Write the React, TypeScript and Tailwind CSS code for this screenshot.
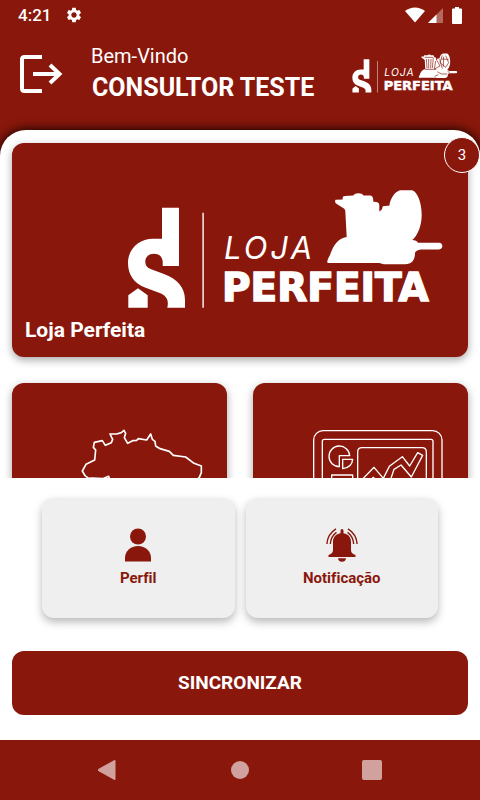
import { MdSettings } from "react-icons/md";

function LogoLojaPerfeita({ className, detailed = false }: { className: string; detailed?: boolean }) {
  return (
    <svg viewBox="0 0 316 120" fill="#fff" className={className} role="img" aria-label="Loja Perfeita">
      {/* SD symbol */}
      <path d="M34 18.7H51V77H34.7V73C34.7 68 31 64.7 26 64.7C21 64.7 17.3 68 17.3 72.7C17.3 76.5 19 78.5 22.5 80L36 85C49 90 57 98 57 111V118.7H39.3C40.6 113 40 108 33 104.5L17 98.5C6 94 0 86 0 74C0 60 11 49.7 25 49.7H34Z" />
      <path d="M.3 118.7V106.3L10 99.3L19.7 106.3V118.7Z" />
      <path d="M74.4 23.7H75.8V118.7H74.4Z" />

      <text x="96" y="70" className="font-['Inter'] text-[31px] italic tracking-widest">
        LOJA
      </text>
      <text x="94" y="112" stroke="#fff" strokeWidth="1.5" className="font-['DejaVu_Sans'] text-[39px] font-bold">
        PERFEITA
      </text>

      {/* Kettle, lid and frying pan */}
      <path d="M200 74C198.500 74 199.500 70 202 66C205 57 210 49 218.700 48L217.300 22C217 20 216 19.500 214.700 18.700L208 14.500C206.500 13 207 10.700 208 10.700L214.700 10.500C214.500 8 215 7 217 7L225.300 6.500C227 3.500 234 3.500 235.500 6.500H241C244.500 6.500 245.300 8 245.300 12.700C249 12.500 251.300 13.500 251.300 16V22.500C252.500 21.500 254 21.500 254.500 18C255 16.500 258 17 261.300 16.700C262 11 266 3 272 1.300H284C290 3 293.700 15 293.700 26C293.700 36 290 46 284.300 51C287 51 289 52 290 53.700H311C315.500 53.700 315.500 60.500 311 60.500H294C291 60.500 287.500 62 287 64C287 71 284 75.300 277 75.300H256C254 75.300 253.500 74 251 74Z" />
      {detailed && (
        <g fill="none" stroke="#8a170b" strokeWidth="2">
          <path d="M217 13L242 13M222 18L224 46M229 18V46M236 18L235 46M243 14L240 45M218 49H252" />
          <path d="M250 24L246 48L263 39L254 22M262 19L270 47M270 7L263 29L280 43L289 29L280 8M266 18L289 19M274 11L273 41" />
          <path d="M255 56L267 63H285M247 70L258 65M286 56L292 58" />
        </g>
      )}
    </svg>
  );
}

function StatusBar() {
  return (
    <div className="flex h-[30px] items-center justify-between px-[18px]">
      <div className="flex items-center gap-[14px]">
        <span className="text-[17px] leading-5 font-medium">4:21</span>
        <MdSettings className="size-[18px]" />
      </div>
      <div className="flex items-center">
        <svg viewBox="0 0 20 16" className="h-4 w-5" fill="currentColor">
          <path d="M0 4C6 -.8 14 -.8 20 4L10 15.500Z" />
        </svg>
        <svg viewBox="0 0 16 16" className="ml-[3px] size-4" fill="currentColor">
          <path d="M0 16L15 1V16Z" opacity=".35" />
          <path d="M0 16L8.500 7.500V16Z" />
        </svg>
        <svg viewBox="0 0 10 17" className="ml-2 h-[17px] w-2.5" fill="currentColor">
          <path d="M3 0H7V1.500H9Q10 1.500 10 2.500V16Q10 17 9 17H1Q0 17 0 16V2.500Q0 1.500 1 1.500H3Z" />
        </svg>
      </div>
    </div>
  );
}

function Header() {
  return (
    <header className="flex h-[100px] items-start pr-[22px] pl-5">
      <button type="button" aria-label="Sair" className="mt-6">
        <svg viewBox="0 0 43 40" className="h-10 w-[43px]" fill="none" stroke="currentColor">
          <path d="M22 3H4.500Q2 3 2 5.500V34.500Q2 37 4.500 37H22" strokeWidth="4" />
          <path d="M13 20H39M30 11L39.500 20L30 29" strokeWidth="4" />
        </svg>
      </button>
      <div className="mt-[14px] ml-7 flex-1">
        <p className="text-[20px] leading-6">Bem-Vindo</p>
        <h1 className="pl-px text-[25px] leading-10 font-bold whitespace-nowrap">CONSULTOR TESTE</h1>
      </div>
      <LogoLojaPerfeita detailed className="mt-[23px] h-10 w-[106px]" />
    </header>
  );
}

function BrazilMap() {
  return (
    <svg viewBox="237 174 372 360" className="h-[120px] w-[124px]" fill="none" stroke="#fff" strokeWidth="5" strokeLinejoin="round">
      <path d="M276 324L266 325L255 317L247 303L258 283L284 270L287 240L280 232L283 217L307 212L316 226L334 218L338 208L330 192L350 192L364 188L372 181L377 190L373 203L383 220L398 212L410 211L415 206L440 210L452 192L457 208L465 214L467 228L480 236L508 244L520 256L557 261L582 280L604 288V308L598 322L570 350L564 400L550 440L500 460L480 500L440 530L410 505L430 480L410 440L400 400L350 370L340 345L328 326L326 319L308 326Z" />
    </svg>
  );
}

function ChartBoard() {
  return (
    <svg viewBox="216 174 396 360" className="h-[120px] w-[132px]" fill="none" stroke="#fff" strokeWidth="4" strokeLinejoin="round">
      <rect x="221" y="182" width="385" height="300" rx="28" />
      <rect x="247" y="208" width="332" height="250" rx="6" />
      <path d="M353 420V246Q353 233 366 233H546Q559 233 559 246V420Z" />
      <path d="M298 290A31 31 0 1 1 329 257H298Z" />
      <path d="M308 268H338Q336 292 308 296Z" />
      <rect x="275" y="315" width="63" height="80" />
      <path d="M365 330L402 292L430 325L448 289L487 260L509 288L533 248L548 256L514 321L483 285L462 298L448 340M392 330L400 322L408 330" />
    </svg>
  );
}

const cardClass =
  "flex flex-col items-end rounded-xl bg-[#8a170b] pr-6 text-white shadow-[0_3px_8px_rgba(0,0,0,0.35)]";

function Cards() {
  return (
    <div className="min-h-0 flex-1 overflow-hidden px-3 pt-[13px]">
      <div className="relative">
        <button type="button" className={`${cardClass} w-full pt-[46px] pb-[15px] pl-[13px]`}>
          <LogoLojaPerfeita className="h-[120px] w-[316px]" />
          <span className="mt-[9px] w-full text-left text-[21px] leading-6 font-bold">Loja Perfeita</span>
        </button>
        <span className="absolute -top-1.5 -right-3 flex size-9 items-center justify-center rounded-full border border-white bg-[#8a170b] text-[15px] text-white">
          3
        </span>
      </div>
      <div className="mt-[26px] grid grid-cols-2 gap-[26px]">
        <button type="button" aria-label="Mapa" className={`${cardClass} pt-[45px]`}>
          <BrazilMap />
        </button>
        <button type="button" aria-label="Painel" className={`${cardClass} pt-[45px]`}>
          <ChartBoard />
        </button>
      </div>
    </div>
  );
}

function UserIcon() {
  return (
    <svg viewBox="0 0 26 34" className="h-[34px] w-[26px]" fill="currentColor">
      <circle cx="13" cy="8.500" r="8" />
      <path d="M0 33.500V30C0 23 5.500 18 13 18C20.500 18 26 23 26 30V33.500Z" />
    </svg>
  );
}

function BellIcon() {
  return (
    <svg viewBox="0 0 32 34" className="h-[34px] w-8" fill="currentColor">
      <path d="M16 1Q17.500 1 17.500 3V5.200C23 6 25 10 25 14V22C25 25 27 26 29.500 27V29H2.500V27C5 26 7 25 7 22V14C7 10 9 6 14.500 5.200V3Q14.500 1 16 1ZM12 30.300H20Q19.500 33.800 16 33.800Q12.500 33.800 12 30.300Z" />
      <g fill="none" stroke="currentColor" strokeWidth="1.400">
        <path d="M10 .8Q1.500 6 .9 16M10.500 4.300Q5 8 4.300 16" />
        <path d="M22 .8Q30.500 6 31.100 16M21.500 4.300Q27 8 27.700 16" />
      </g>
    </svg>
  );
}

const actions = [
  { label: "Perfil", Icon: UserIcon },
  { label: "Notificação", Icon: BellIcon },
];

function QuickActions() {
  return (
    <div className="grid grid-cols-2 gap-[11px] px-[42px] pt-5">
      {actions.map(({ label, Icon }) => (
        <button
          key={label}
          type="button"
          className="flex h-[120px] flex-col items-center rounded-xl bg-[#efefef] pt-[30px] text-[#8a170b] shadow-[0_4px_8px_rgba(0,0,0,0.28)]"
        >
          <Icon />
          <span className="mt-1.5 text-[15px] leading-5 font-bold [font-variant-ligatures:none]">{label}</span>
        </button>
      ))}
    </div>
  );
}

function NavigationBar() {
  return (
    <nav className="flex h-[60px] items-center justify-center gap-[112px] bg-[#8a170b] text-[#d1a29d]">
      <button type="button" aria-label="Voltar">
        <svg viewBox="0 0 20 20" className="size-5" fill="currentColor">
          <path d="M16 .3Q17.500 -.3 17.500 1V19Q17.500 20.300 16 19.700L.3 11Q-1 10 .3 9Z" />
        </svg>
      </button>
      <button type="button" aria-label="Início" className="flex size-5 items-center justify-center">
        <span className="size-[18px] rounded-full bg-current" />
      </button>
      <button type="button" aria-label="Recentes" className="size-5 rounded-xs bg-current" />
    </nav>
  );
}

export default function App() {
  return (
    <div className="flex h-screen flex-col overflow-hidden bg-[#8a170b] font-['Roboto',sans-serif] text-white">
      <StatusBar />
      <Header />
      <main className="flex min-h-0 flex-1 flex-col rounded-t-[26px] bg-white shadow-[0_0_12px_#000]">
        <Cards />
        <QuickActions />
        <div className="px-3 pt-[33px] pb-[25px]">
          <button type="button" className="h-16 w-full rounded-xl bg-[#8a170b] text-[19px] font-bold text-white">
            SINCRONIZAR
          </button>
        </div>
      </main>
      <div className="relative">
        <NavigationBar />
      </div>
    </div>
  );
}
